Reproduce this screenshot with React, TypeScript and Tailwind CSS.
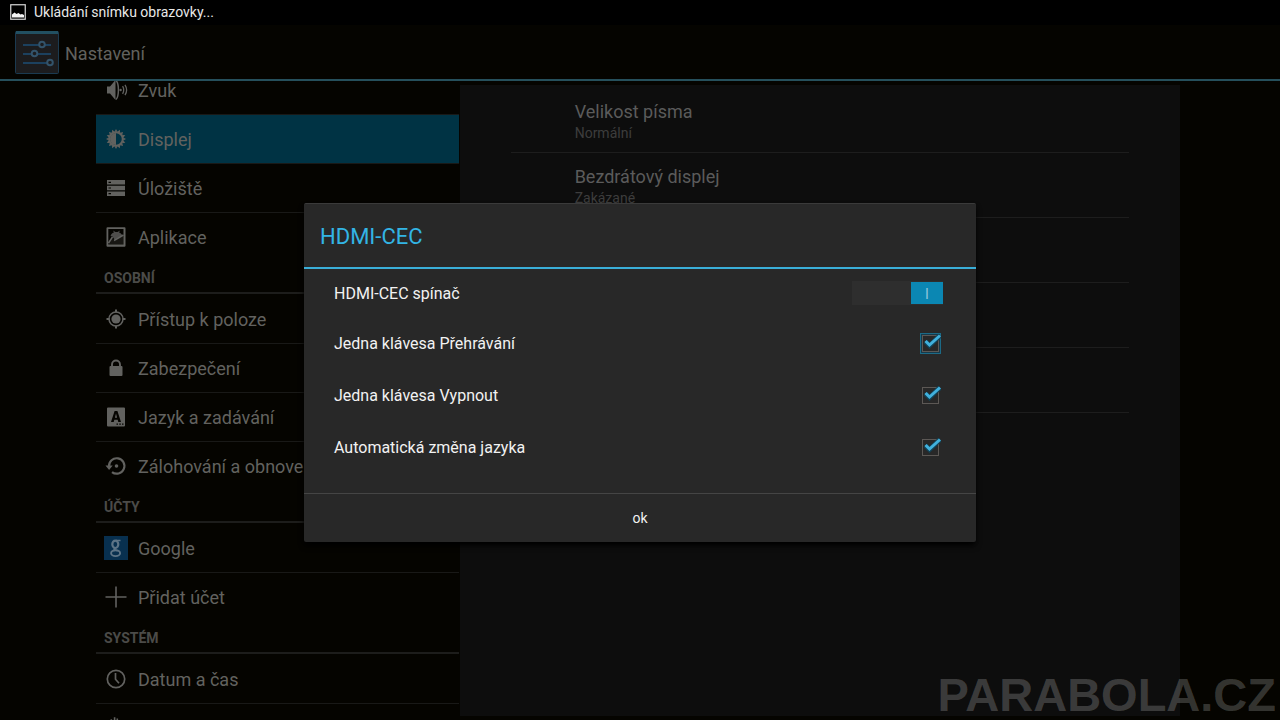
import React, { useState } from 'react';

type IconName =
  | 'sound' | 'display' | 'storage' | 'apps' | 'location' | 'lock'
  | 'language' | 'backup' | 'google' | 'add' | 'clock' | 'accessibility';

const Icon: React.FC<{ name: IconName }> = ({ name }) => {
  const rays = Array.from({ length: 16 }, (_, i) => i * 22.5);

  return (
    <svg viewBox="0 0 24 24" className="size-6 shrink-0" fill="currentColor" aria-hidden="true">
      {name === 'sound' && (
        <>
          <path d="M3 8.500h3l5.500-6.500v20L6 15.500H3z" />
          <path d="M12 2.500c3.200 3 3.200 16 0 19" fill="none" stroke="currentColor" strokeWidth="1.500" />
          <circle cx="16.600" cy="12" r="1.200" />
          <path d="M18.600 8.200c1.300 2.200 1.300 5.400 0 7.600M21 6.800c2 3.200 2 7.200 0 10.400" fill="none" stroke="currentColor" strokeWidth="1.300" />
        </>
      )}
      {name === 'display' && (
        <>
          {rays.map((angle) => (
            <path key={angle} d="M10.500 4.800 12 2l1.500 2.800z" transform={`rotate(${angle} 12 12)`} />
          ))}
          <circle cx="12" cy="12" r="6.700" fill="none" stroke="currentColor" strokeWidth="1.900" />
          <path d="M12 6a6 6 0 0 0 0 12z" />
        </>
      )}
      {name === 'storage' && (
        <path fillRule="evenodd" d="M3 4h18v4.600H3zM3 9.700h18v4.600H3zM3 15.400h18V20H3zM4.500 5.700v1.200H7V5.700zM4.500 11.400v1.200H7v-1.200zM4.500 17.100v1.200H7v-1.200z" />
      )}
      {name === 'apps' && (
        <>
          <path fillRule="evenodd" d="M3.500 2.200h17a1 1 0 0 1 1 1v17.600a1 1 0 0 1-1 1h-17a1 1 0 0 1-1-1V3.200a1 1 0 0 1 1-1zM4.300 4v15.500h15.200V4z" />
          <path d="M4.300 19.500V17.500L8 13l2.500 3 9-6v9.500z" opacity=".2" />
          <path d="M6.500 11c.8-2.200 2.200-3.200 3.500-3.500L9 5.500l2.500 1.600h2L16 5.500l-1 2c1.800.7 2.800 1.800 3.300 3L10.500 14.500 8.500 11.500z" opacity=".8" />
          <path d="m4.500 18 4-6M10 15.500l9.500-5.500" fill="none" stroke="currentColor" strokeWidth="1.500" />
        </>
      )}
      {name === 'location' && (
        <>
          <circle cx="12" cy="12" r="4.600" />
          <circle cx="12" cy="12" r="7" fill="none" stroke="currentColor" strokeWidth="1.500" />
          <path d="M11 2.500h2v3h-2zM11 18.500h2v3h-2zM2.500 11h3v2h-3zM18.500 11h3v2h-3z" />
        </>
      )}
      {name === 'lock' && (
        <>
          <rect x="5.500" y="10" width="13" height="10" rx="1" />
          <path d="M8 11V8.500a4 4 0 0 1 8 0V11" fill="none" stroke="currentColor" strokeWidth="1.900" />
        </>
      )}
      {name === 'language' && (
        <path fillRule="evenodd" d="M4 2.500h16a1 1 0 0 1 1 1v17a1 1 0 0 1-1 1H4a1 1 0 0 1-1-1v-17a1 1 0 0 1 1-1zM10.600 6 7 17h2.700l.6-2.200h3.400l.6 2.200H17L13.400 6zM12 8.600l1.100 4.100h-2.200zM12.500 18.500v1.200h1.500v-1.200zM15.300 18.500v1.200h1.500v-1.200zM18 18.500v1.200h1.500v-1.200z" />
      )}
      {name === 'backup' && (
        <>
          <path d="M5 12.500a7.700 7.700 0 1 1 3 5.600" fill="none" stroke="currentColor" strokeWidth="2.200" />
          <path d="M1.500 11.500h7.200L5.100 16z" />
          <circle cx="12.500" cy="12" r="1.800" />
        </>
      )}
      {name === 'google' && (
        <>
          <rect width="24" height="24" fill="#08304f" />
          <g fill="none" stroke="#5d7486">
            <ellipse cx="11.300" cy="8.300" rx="3" ry="3.700" strokeWidth="2.200" />
            <path d="M12 4.600h4.500M12.500 11.700c-3.500.8-3.200 2 .2 2.900" strokeWidth="1.500" />
            <ellipse cx="11.600" cy="17.200" rx="4.500" ry="2.900" strokeWidth="1.900" />
          </g>
        </>
      )}
      {name === 'add' && <path d="M11.200 1.500h1.600v9.700h9.700v1.600h-9.700v9.700h-1.600v-9.700H1.500v-1.600h9.700z" />}
      {name === 'clock' && (
        <g fill="none" stroke="currentColor">
          <circle cx="12" cy="12" r="8.700" strokeWidth="1.700" />
          <path d="M11.500 6v6.300l3.500 4" strokeWidth="1.700" />
        </g>
      )}
      {name === 'accessibility' && (
        <path d="M9.800 1.200h1.600v8H9.800zM12.500 2.500h1.600V10h-1.600zM6.500 3.200h1.600V10H6.500zM6 8h10v10H6z" />
      )}
    </svg>
  );
};

interface NavItem {
  label: string;
  icon: IconName;
  active?: boolean;
}

const sections: { title?: string; items: NavItem[] }[] = [
  {
    items: [
      { label: 'Zvuk', icon: 'sound' },
      { label: 'Displej', icon: 'display', active: true },
      { label: 'Úložiště', icon: 'storage' },
      { label: 'Aplikace', icon: 'apps' },
    ],
  },
  {
    title: 'OSOBNÍ',
    items: [
      { label: 'Přístup k poloze', icon: 'location' },
      { label: 'Zabezpečení', icon: 'lock' },
      { label: 'Jazyk a zadávání', icon: 'language' },
      { label: 'Zálohování a obnove', icon: 'backup' },
    ],
  },
  {
    title: 'ÚČTY',
    items: [
      { label: 'Google', icon: 'google' },
      { label: 'Přidat účet', icon: 'add' },
    ],
  },
  {
    title: 'SYSTÉM',
    items: [
      { label: 'Datum a čas', icon: 'clock' },
      { label: '', icon: 'accessibility' },
    ],
  },
];

const preferences = [
  { title: 'Velikost písma', summary: 'Normální' },
  { title: 'Bezdrátový displej', summary: 'Zakázané' },
  { title: '', summary: '' },
  { title: '', summary: '' },
  { title: '', summary: '' },
];

const StatusBar = () => (
  <div className="flex h-[25px] shrink-0 items-center gap-2 bg-black pb-px pl-2.5 text-sm text-[#e8e8e8]">
    <svg viewBox="0 0 16 16" className="size-4" aria-hidden="true">
      <rect x="0.750" y="0.750" width="14.500" height="14.500" fill="none" stroke="#d8d8d8" strokeWidth="1.200" />
      <path d="M2 13.500V10.500l2.500-2 2 1.500 2-1 2 1.500 1.500-.5 2 1v2.500z" fill="#f4f4f4" />
    </svg>
    <span>Ukládání snímku obrazovky...</span>
  </div>
);

const ActionBar = () => (
  <header className="flex h-14 shrink-0 items-center gap-1.5 border-b-2 border-[#26505c] pl-[15px]">
    <svg viewBox="0 0 44 44" className="size-11" aria-hidden="true">
      <rect x="0.500" y="1.500" width="43" height="42" rx="1" fill="#1c1c1e" stroke="#1b3a50" />
      <path d="M1 1h42v3H1z" fill="#225062" />
      <g stroke="#1c415f" strokeWidth="2">
        <path d="M8 15h28M8 24h28M8 33h28" />
      </g>
      <g fill="#1c1c1e" stroke="#33536a" strokeWidth="2">
        <circle cx="27" cy="14.500" r="2.800" />
        <circle cx="19.500" cy="23.500" r="2.800" />
        <circle cx="35" cy="32.500" r="2.800" />
      </g>
    </svg>
    <h1 className="pt-1 text-lg text-[#61615e]">Nastavení</h1>
  </header>
);

const Sidebar = () => (
  <nav className="-mt-[15px] w-1/3 shrink-0">
    {sections.map((section, index) => (
      <section key={index}>
        {section.title && (
          <h2 className="mb-px flex h-8 items-center border-b-2 border-[#1d1d1b] pt-0.5 pl-2 text-sm font-bold text-[#4b4b48]">
            {section.title}
          </h2>
        )}
        <ul className="divide-y divide-[#191917] border-b border-transparent">
          {section.items.map((item) => (
            <li key={item.icon} className={item.active ? 'bg-[#003344]' : ''}>
              <a
                href={`#${item.icon}`}
                aria-label={item.label || item.icon}
                className="flex h-12 items-center gap-2.5 pl-2 text-lg whitespace-nowrap text-[#62625f]"
              >
                <Icon name={item.icon} />
                <span className="pt-0.5">{item.label}</span>
              </a>
            </li>
          ))}
        </ul>
      </section>
    ))}
  </nav>
);

const Preferences = () => (
  <main className="mt-1 mr-1 mb-1 ml-px flex-1 bg-[#0d0d0d] px-[51px] pt-[3px]">
    {preferences.map((pref, index) => (
      <div key={index} className="flex h-[65px] flex-col justify-center border-b border-[#1d1d1d] pt-px pl-16">
        <p className="text-lg leading-6 text-[#5b5b5b]">{pref.title}</p>
        <p className="text-sm leading-[18px] text-[#3d3d3d]">{pref.summary}</p>
      </div>
    ))}
  </main>
);

interface OptionProps {
  label: string;
  focused?: boolean;
}

const CheckOption: React.FC<OptionProps> = ({ label, focused }) => {
  const [checked, setChecked] = useState(true);

  return (
    <label className="flex h-[52px] items-center justify-between pr-0.5">
      <span className="pt-0.5">{label}</span>
      <span className={`relative flex border p-px ${focused ? 'border-[#1c6a86] bg-[#16394a]' : 'border-transparent'}`}>
        <input
          type="checkbox"
          checked={checked}
          onChange={() => setChecked(!checked)}
          className="size-[17px] appearance-none border border-[#5c5855] bg-[#282828]"
        />
        {checked && (
          <svg viewBox="0 0 21 21" className="pointer-events-none absolute -inset-px size-[21px]" aria-hidden="true">
            <path d="m5.500 8.500 4 4 10.500-10" fill="none" stroke="#124256" strokeWidth="5" />
            <path d="m5.500 8 4 4L20 2.500" fill="none" stroke="#41b1dd" strokeWidth="3" />
          </svg>
        )}
      </span>
    </label>
  );
};

const SwitchOption: React.FC<OptionProps> = ({ label }) => {
  const [on, setOn] = useState(true);

  return (
    <label className="flex h-12 items-center justify-between">
      <span className="pt-0.5">{label}</span>
      <span className={`flex h-6 w-[91px] items-center bg-[#2e2e2e] ${on ? 'justify-end' : 'justify-start'}`}>
        <input
          type="checkbox"
          role="switch"
          checked={on}
          onChange={() => setOn(!on)}
          className="sr-only"
        />
        <span className="flex h-[22px] w-8 items-center justify-center bg-[#0b87b3] pt-0.5 text-sm text-[#8fc4dc]">
          {on ? 'I' : 'O'}
        </span>
      </span>
    </label>
  );
};

const HdmiDialog = () => (
  <div
    role="dialog"
    aria-labelledby="dialog-title"
    className="w-full max-w-2xl rounded-xs border-t border-[#3a3a3a] bg-[#282828] text-[#f2f2f2] shadow-md shadow-black"
  >
    <h2 id="dialog-title" className="flex h-[65px] items-center border-b-2 border-[#3aaed8] px-4 pt-0.5 text-[22px] text-[#33b5e5]">
      HDMI-CEC
    </h2>
    <div className="pr-[33px] pb-5 pl-[30px] text-base">
      <SwitchOption label="HDMI-CEC spínač" />
      <CheckOption label="Jedna klávesa Přehrávání" focused />
      <CheckOption label="Jedna klávesa Vypnout" />
      <CheckOption label="Automatická změna jazyka" />
    </div>
    <button type="button" className="h-[49px] w-full border-t border-[#454545] text-sm">
      ok
    </button>
  </div>
);

const App = () => (
  <div className="relative flex h-screen flex-col overflow-hidden bg-[#050400] font-[Roboto,sans-serif]">
    <StatusBar />
    <ActionBar />
    <div className="flex min-h-0 flex-1 overflow-hidden px-24">
      <Sidebar />
      <Preferences />
    </div>
    <div className="absolute inset-x-0 top-[25px] bottom-0 flex items-center justify-center">
      <HdmiDialog />
    </div>
    <p className="pointer-events-none absolute right-1 bottom-0 font-['Liberation_Sans',sans-serif] text-[47px] leading-[50px] font-bold text-white/20">
      PARABOLA.CZ
    </p>
  </div>
);

export default App;
